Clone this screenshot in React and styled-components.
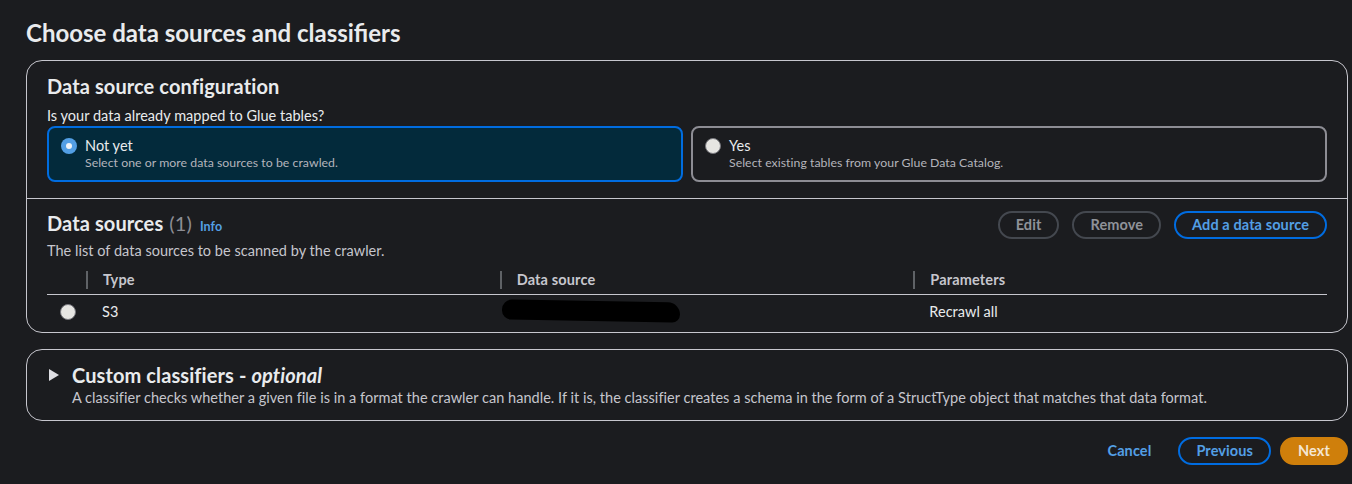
import React from 'react';
import styled, { createGlobalStyle } from 'styled-components';

const GlobalStyle = createGlobalStyle`
  body {
    margin: 0;
    background: #1b1c1f;
    font-family: Lato, "Liberation Sans", sans-serif;
    color: #e9ebed;
    font-size: 14.5px;
    letter-spacing: 0.03px;
  }
`;

const Page = styled.div`
  padding: 18px 4px 0 26px;
`;

const Title = styled.h1`
  margin: 0 0 12px;
  font-size: 24px;
  line-height: 30px;
  font-weight: 700;
  letter-spacing: 0;
  color: #e9ebed;
`;

const Container = styled.section`
  border: 1px solid #c6c6cd;
  border-radius: 16px;
  overflow: hidden;
  & + & {
    margin-top: 16px;
  }
`;

const Section = styled.div`
  padding: ${p => p.$pad};
  & + & {
    border-top: 1px solid #c6c6cd;
  }
`;

const Heading = styled.h2`
  margin: 0;
  font-size: 20px;
  line-height: 24px;
  font-weight: 700;
  letter-spacing: 0.1px;
  color: #e9ebed;
  display: flex;
  align-items: baseline;
`;

const Count = styled.span`
  font-weight: 400;
  color: #8d8d94;
  margin-left: 6px;
`;

const Info = styled.a`
  font-size: 12.5px;
  font-weight: 700;
  color: #539fe5;
  margin-left: 8px;
`;

const Label = styled.div`
  margin-top: 8px;
  line-height: 20px;
  color: #e9ebed;
`;

const Tiles = styled.div`
  display: grid;
  grid-template-columns: 1fr 1fr;
  gap: 8px;
`;

const Tile = styled.label`
  display: flex;
  align-items: flex-start;
  gap: 8px;
  padding: 9px 12px;
  border-radius: 8px;
  border: 2px solid ${p => (p.$checked ? '#006ce0' : '#8d8d94')};
  background: ${p => (p.$checked ? '#032a3b' : 'transparent')};
`;

const Radio = styled.span`
  flex: none;
  box-sizing: border-box;
  width: 16px;
  height: 16px;
  margin-top: 1px;
  border-radius: 50%;
  display: flex;
  align-items: center;
  justify-content: center;
  background: ${p => (p.$checked ? '#539fe5' : '#e6e5e2')};
  border: ${p => (p.$checked ? 'none' : '1px solid #77777d')};
  &::after {
    content: '';
    width: 6px;
    height: 6px;
    border-radius: 50%;
    background: #f0f4f8;
    display: ${p => (p.$checked ? 'block' : 'none')};
  }
`;

const TileText = styled.div`
  display: flex;
  flex-direction: column;
`;

const TileTitle = styled.span`
  font-size: 14.5px;
  line-height: 18px;
  color: #e9ebed;
`;

const TileDesc = styled.span`
  font-size: 12.3px;
  line-height: 16px;
  color: #b4b4bb;
`;

const HeaderRow = styled.div`
  display: flex;
  align-items: center;
  justify-content: space-between;
  height: 28px;
`;

const Actions = styled.div`
  display: flex;
  align-items: center;
  gap: ${p => p.$gap || 13}px;
`;

const Button = styled.button`
  font-family: inherit;
  font-size: 14.5px;
  letter-spacing: 0.1px;
  font-weight: 700;
  line-height: 20px;
  height: 28px;
  padding: 0 ${p => p.$px || 16}px;
  border-radius: 20px;
  cursor: pointer;
  border: 2px solid
    ${p =>
      p.$variant === 'primary'
        ? '#cf7f0b'
        : p.$variant === 'normal'
        ? '#006ce0'
        : p.$variant === 'link'
        ? 'transparent'
        : '#44484f'};
  background: ${p => (p.$variant === 'primary' ? '#cf7f0b' : 'transparent')};
  color: ${p =>
    p.$variant === 'primary'
      ? '#f4e6d2'
      : p.$variant === 'disabled'
      ? '#8f9299'
      : '#539fe5'};
`;

const Description = styled.p`
  margin: ${p => p.$mt ?? 2}px 0 0;
  line-height: 20px;
  color: #c6c6cd;
`;

const Table = styled.table`
  width: 100%;
  margin-top: 9px;
  border-collapse: collapse;
  table-layout: fixed;
`;

const Th = styled.th`
  padding: 0;
  text-align: left;
  border-bottom: 1px solid #c6c6cd;
  width: ${p => p.$w || 'auto'};
`;

const ThInner = styled.div`
  height: 18px;
  line-height: 18px;
  margin: 1px 0 5px;
  padding-left: 15px;
  border-left: 2px solid #5f6266;
  font-weight: 700;
  letter-spacing: 0.15px;
  color: #c6c6cd;
`;

const Td = styled.td`
  height: 32px;
  padding: 0 0 0 ${p => p.$pl ?? 16}px;
  color: #e9ebed;
  vertical-align: middle;
`;

const Redacted = styled.span`
  display: block;
  width: 178px;
  height: 20px;
  background: #000;
  border-radius: 10px 12px 8px 9px;
  transform: skewY(1deg);
`;

const ExpandHeader = styled.div`
  display: flex;
  align-items: center;
`;

const Caret = styled.span`
  width: 25px;
  flex: none;
  display: flex;
  align-items: center;
  padding-left: 2px;
  box-sizing: border-box;
`;

const Indented = styled.div`
  padding-left: 25px;
`;

const Footer = styled.div`
  display: flex;
  justify-content: flex-end;
  margin-top: 16px;
`;

export default function App() {
  return (
    <>
      <GlobalStyle />
      <Page>
        <Title>Choose data sources and classifiers</Title>
        <Container>
          <Section $pad="13px 20px 16px">
            <Heading>Data source configuration</Heading>
            <Label>Is your data already mapped to Glue tables?</Label>
            <Tiles>
              <Tile $checked>
                <Radio $checked />
                <TileText>
                  <TileTitle>Not yet</TileTitle>
                  <TileDesc>Select one or more data sources to be crawled.</TileDesc>
                </TileText>
              </Tile>
              <Tile>
                <Radio />
                <TileText>
                  <TileTitle>Yes</TileTitle>
                  <TileDesc>Select existing tables from your Glue Data Catalog.</TileDesc>
                </TileText>
              </Tile>
            </Tiles>
          </Section>
          <Section $pad="12px 20px 5px">
            <HeaderRow>
              <Heading>
                Data sources<Count>(1)</Count>
                <Info>Info</Info>
              </Heading>
              <Actions>
                <Button $variant="disabled">Edit</Button>
                <Button $variant="disabled">Remove</Button>
                <Button $variant="normal">Add a data source</Button>
              </Actions>
            </HeaderRow>
            <Description>The list of data sources to be scanned by the crawler.</Description>
            <Table>
              <thead>
                <tr>
                  <Th $w="39px" />
                  <Th><ThInner>Type</ThInner></Th>
                  <Th><ThInner>Data source</ThInner></Th>
                  <Th><ThInner>Parameters</ThInner></Th>
                </tr>
              </thead>
              <tbody>
                <tr>
                  <Td $pl={13}><Radio /></Td>
                  <Td>S3</Td>
                  <Td $pl={2}><Redacted /></Td>
                  <Td>Recrawl all</Td>
                </tr>
              </tbody>
            </Table>
          </Section>
        </Container>
        <Container>
          <Section $pad="13px 20px 12px">
            <ExpandHeader>
              <Caret>
                <svg width="10" height="12" viewBox="0 0 10 12">
                  <polygon points="0,0 10,6 0,12" fill="#dedee3" />
                </svg>
              </Caret>
              <Heading>
                Custom classifiers -&nbsp;<i>optional</i>
              </Heading>
            </ExpandHeader>
            <Indented>
              <Description $mt={1}>
                A classifier checks whether a given file is in a format the crawler can handle. If it is, the classifier creates a schema in the form of a StructType object that matches that data format.
              </Description>
            </Indented>
          </Section>
        </Container>
        <Footer>
          <Actions $gap={9}>
            <Button $variant="link" $px={16}>Cancel</Button>
            <Button $variant="normal">Previous</Button>
            <Button $variant="primary">Next</Button>
          </Actions>
        </Footer>
      </Page>
    </>
  );
}
